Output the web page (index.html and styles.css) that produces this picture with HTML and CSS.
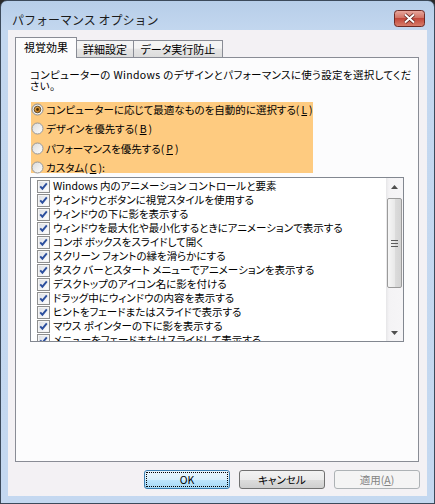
FILE: index.html
```html
<!DOCTYPE html>
<html lang="ja">
<head>
  <meta charset="UTF-8">
  <title>パフォーマンス オプション</title>
  <link rel="stylesheet" href="styles.css">
</head>
<body>

  <!-- shared glyphs -->
  <svg class="sprite" width="0" height="0">
    <defs>
      <linearGradient id="radioFill" x1="0" y1="0" x2="1" y2="1">
        <stop offset="0" stop-color="#d9d9d9"/>
        <stop offset="1" stop-color="#ffffff"/>
      </linearGradient>
      <linearGradient id="dotFill" x1="0" y1="0" x2="1" y2="1">
        <stop offset="0" stop-color="#f0b45a"/>
        <stop offset="1" stop-color="#b86a10"/>
      </linearGradient>
      <linearGradient id="boxFill" x1="0" y1="0" x2="1" y2="1">
        <stop offset="0" stop-color="#dcdfe4"/>
        <stop offset="1" stop-color="#ffffff"/>
      </linearGradient>
      <linearGradient id="closeFill" x1="0" y1="0" x2="0" y2="1">
        <stop offset="0" stop-color="#e9aaa0"/>
        <stop offset="0.45" stop-color="#d27466"/>
        <stop offset="0.5" stop-color="#c2473a"/>
        <stop offset="1" stop-color="#d9806d"/>
      </linearGradient>
    </defs>
    <symbol id="radio-off" viewBox="0 0 13 13">
      <circle cx="6.5" cy="6.5" r="5.5" fill="url(#radioFill)" stroke="#979797"/>
    </symbol>
    <symbol id="radio-on" viewBox="0 0 13 13">
      <circle cx="6.5" cy="6.5" r="5.5" fill="url(#radioFill)" stroke="#8c8c8c"/>
      <circle cx="6.5" cy="6.5" r="3.3" fill="url(#dotFill)" stroke="#5b4520" stroke-width="0.9"/>
      <circle cx="6.5" cy="6.5" r="1.4" fill="#4a3108"/>
    </symbol>
    <symbol id="check" viewBox="0 0 13 13">
      <rect x="0.5" y="0.5" width="12" height="12" fill="#f5f5f5" stroke="#8e8f8f"/>
      <rect x="2" y="2" width="9" height="9" fill="url(#boxFill)"/>
      <path d="M3.2 6.3 L5.4 8.7 L9.8 3.4" fill="none" stroke="#2c4f9e" stroke-width="1.9"/>
    </symbol>
  </svg>

  <div class="window">
    <div class="titlebar">
      <span class="title">パフォーマンス オプション</span>
      <svg class="close" width="31" height="17" viewBox="0 0 31 17">
        <rect x="0.5" y="0.5" width="30" height="16" rx="3" fill="url(#closeFill)" stroke="#6d2a24"/>
        <path d="M11 4.5 L20 12.5 M20 4.5 L11 12.5" stroke="#5a1f1a" stroke-width="3.6"/>
        <path d="M11 4.5 L20 12.5 M20 4.5 L11 12.5" stroke="#ffffff" stroke-width="2"/>
      </svg>
    </div>

    <div class="client">
      <div class="tabs">
        <div class="tab active">視覚効果</div>
        <div class="tab tab-2">詳細設定</div>
        <div class="tab tab-3">データ実行防止</div>
      </div>

      <div class="panel">
        <p class="desc">コンピューターの Windows のデザインとパフォーマンスに使う設定を選択してください。</p>

        <div class="choices">
          <div class="choice"><svg class="radio"><use href="#radio-on"/></svg>コンピューターに応じて最適なものを自動的に選択する(<u>L</u>)</div>
          <div class="choice"><svg class="radio"><use href="#radio-off"/></svg>デザインを優先する(<u>B</u>)</div>
          <div class="choice"><svg class="radio"><use href="#radio-off"/></svg>パフォーマンスを優先する(<u>P</u>)</div>
          <div class="choice"><svg class="radio"><use href="#radio-off"/></svg>カスタム(<u>C</u>):</div>
        </div>

        <div class="listbox">
          <ul class="items">
            <li><svg class="box"><use href="#check"/></svg>Windows 内のアニメーション コントロールと要素</li>
            <li><svg class="box"><use href="#check"/></svg>ウィンドウとボタンに視覚スタイルを使用する</li>
            <li><svg class="box"><use href="#check"/></svg>ウィンドウの下に影を表示する</li>
            <li><svg class="box"><use href="#check"/></svg>ウィンドウを最大化や最小化するときにアニメーションで表示する</li>
            <li><svg class="box"><use href="#check"/></svg>コンボ ボックスをスライドして開く</li>
            <li><svg class="box"><use href="#check"/></svg>スクリーン フォントの縁を滑らかにする</li>
            <li><svg class="box"><use href="#check"/></svg>タスク バーとスタート メニューでアニメーションを表示する</li>
            <li><svg class="box"><use href="#check"/></svg>デスクトップのアイコン名に影を付ける</li>
            <li><svg class="box"><use href="#check"/></svg>ドラッグ中にウィンドウの内容を表示する</li>
            <li><svg class="box"><use href="#check"/></svg>ヒントをフェードまたはスライドで表示する</li>
            <li><svg class="box"><use href="#check"/></svg>マウス ポインターの下に影を表示する</li>
            <li><svg class="box"><use href="#check"/></svg>メニューをフェードまたはスライドして表示する</li>
          </ul>
          <div class="scrollbar">
            <div class="sb-btn">
              <svg width="7" height="4" viewBox="0 0 7 4"><path d="M0 4 L3.5 0 L7 4 Z" fill="#4e4e4e"/></svg>
            </div>
            <div class="thumb">
              <svg width="7" height="7" viewBox="0 0 7 7"><path d="M0 0.5 H7 M0 3.5 H7 M0 6.5 H7" stroke="#5c5c5c"/></svg>
            </div>
            <div class="track"></div>
            <div class="sb-btn">
              <svg width="7" height="4" viewBox="0 0 7 4"><path d="M0 0 L7 0 L3.5 4 Z" fill="#4e4e4e"/></svg>
            </div>
          </div>
        </div>
      </div>

      <div class="buttons">
        <button class="btn btn-default">OK</button>
        <button class="btn">キャンセル</button>
        <button class="btn" disabled>適用(<u>A</u>)</button>
      </div>
    </div>
  </div>

</body>
</html>
```

FILE: styles.css
```css
body {
  margin: 0;
  background: #2a2a2a;
  font-family: "Noto Sans CJK JP", "Noto Sans", sans-serif;
  font-size: 10.5px;
  color: #000;
  font-feature-settings: "palt";
}
.sprite {
  display: block;
  width: 0;
  height: 0;
}
.window {
  width: 435px;
  height: 504px;
  box-sizing: border-box;
  border: 1px solid #3c4a5b;
  border-radius: 7px 7px 0 0;
  background: linear-gradient(#b7cee9, #c3d7ef 30px, #c4d8f0);
  display: flex;
  flex-direction: column;
}
.titlebar {
  height: 29px;
  box-sizing: border-box;
  padding: 9px 9px 0 11px;
  display: flex;
  justify-content: space-between;
  align-items: flex-start;
}
.title {
  font-size: 12px;
  line-height: 16px;
  margin-top: 2px;
  color: #1b1b1b;
  font-feature-settings: normal;
}
.close {
  display: block;
}
.client {
  flex: 1;
  margin: 0 7px 7px;
  background: #f3f1f4;
  display: flex;
  flex-direction: column;
}

/* tabs */
.tabs {
  display: flex;
  align-items: flex-end;
  height: 20px;
  padding: 7px 0 0 7px;
}
.tab {
  box-sizing: border-box;
  height: 17px;
  line-height: 16px;
  font-size: 11px;
  border: 1px solid #898c95;
  border-bottom: none;
  background: linear-gradient(#f4f4f4 45%, #e5e5e5 50%, #dcdcdc);
  text-align: center;
}
.tab + .tab {
  margin-left: -1px;
}
.tab.active {
  width: 62px;
  height: 21px;
  line-height: 19px;
  margin-bottom: -1px;
  background: #fcfcfd;
  position: relative;
  z-index: 1;
}
.tab-2 {
  width: 58px;
}
.tab-3 {
  width: 90px;
}

/* panel */
.panel {
  box-sizing: border-box;
  height: 405px;
  margin: 0 8px 0 7px;
  padding: 11px 6px 0 14px;
  border: 1px solid #898c95;
  background: #fcfcfd;
}
.desc {
  margin: 0;
  line-height: 11px;
  letter-spacing: 0.35px;
}
.choices {
  display: flow-root;
  width: 282px;
  height: 71px;
  margin: 11px 0 0 1px;
  background: #fecb80;
}
.choice {
  height: 19.5px;
  display: flex;
  align-items: center;
  gap: 2px;
  white-space: nowrap;
}
.choice:first-child {
  margin-top: -2.5px;
}
.radio {
  width: 13px;
  height: 13px;
  flex: none;
}

/* list box */
.listbox {
  box-sizing: border-box;
  width: 374px;
  height: 165px;
  margin-top: 4px;
  border: 1px solid #828790;
  background: #fff;
  display: flex;
  overflow: hidden;
}
.items {
  flex: 1;
  list-style: none;
  margin: 0;
  padding: 1px 0 0 6px;
  overflow: hidden;
}
.items li {
  height: 14px;
  line-height: 14px;
  display: flex;
  align-items: center;
  gap: 3px;
  white-space: nowrap;
}
.box {
  width: 13px;
  height: 13px;
  flex: none;
}
.scrollbar {
  width: 17px;
  display: flex;
  flex-direction: column;
  background: linear-gradient(to right, #e6e6e8, #f4f3f5 3px, #f6f5f7);
}
.sb-btn {
  height: 17px;
  display: flex;
  align-items: center;
  justify-content: center;
}
.thumb {
  box-sizing: border-box;
  height: 90px;
  margin: 3px 1px 0;
  border: 1px solid #9a9a9a;
  border-radius: 2px;
  background: linear-gradient(to right, #f6f6f6, #e9e9e9 50%, #dcdcdc 52%, #d3d3d3);
  display: flex;
  align-items: center;
  justify-content: center;
}
.track {
  flex: 1;
}

/* buttons */
.buttons {
  display: flex;
  justify-content: flex-end;
  gap: 9px;
  margin: 8px 7px 0 0;
}
.btn {
  box-sizing: border-box;
  width: 86px;
  height: 19px;
  padding: 0;
  font: inherit;
  color: #000;
  border: 1px solid #707070;
  border-radius: 3px;
  background: linear-gradient(#f2f2f2, #ebebeb 50%, #dddddd 51%, #cfcfcf);
}
.btn-default {
  border-color: #3c7fb1;
  background: linear-gradient(#eaf6fd, #d9f0fc 50%, #bee6fd 51%, #a7d9f5);
  outline: 1px dotted #000;
  outline-offset: -3px;
}
.btn:disabled {
  border-color: #adb2b5;
  background: #f4f4f4;
  color: #838383;
}
```
